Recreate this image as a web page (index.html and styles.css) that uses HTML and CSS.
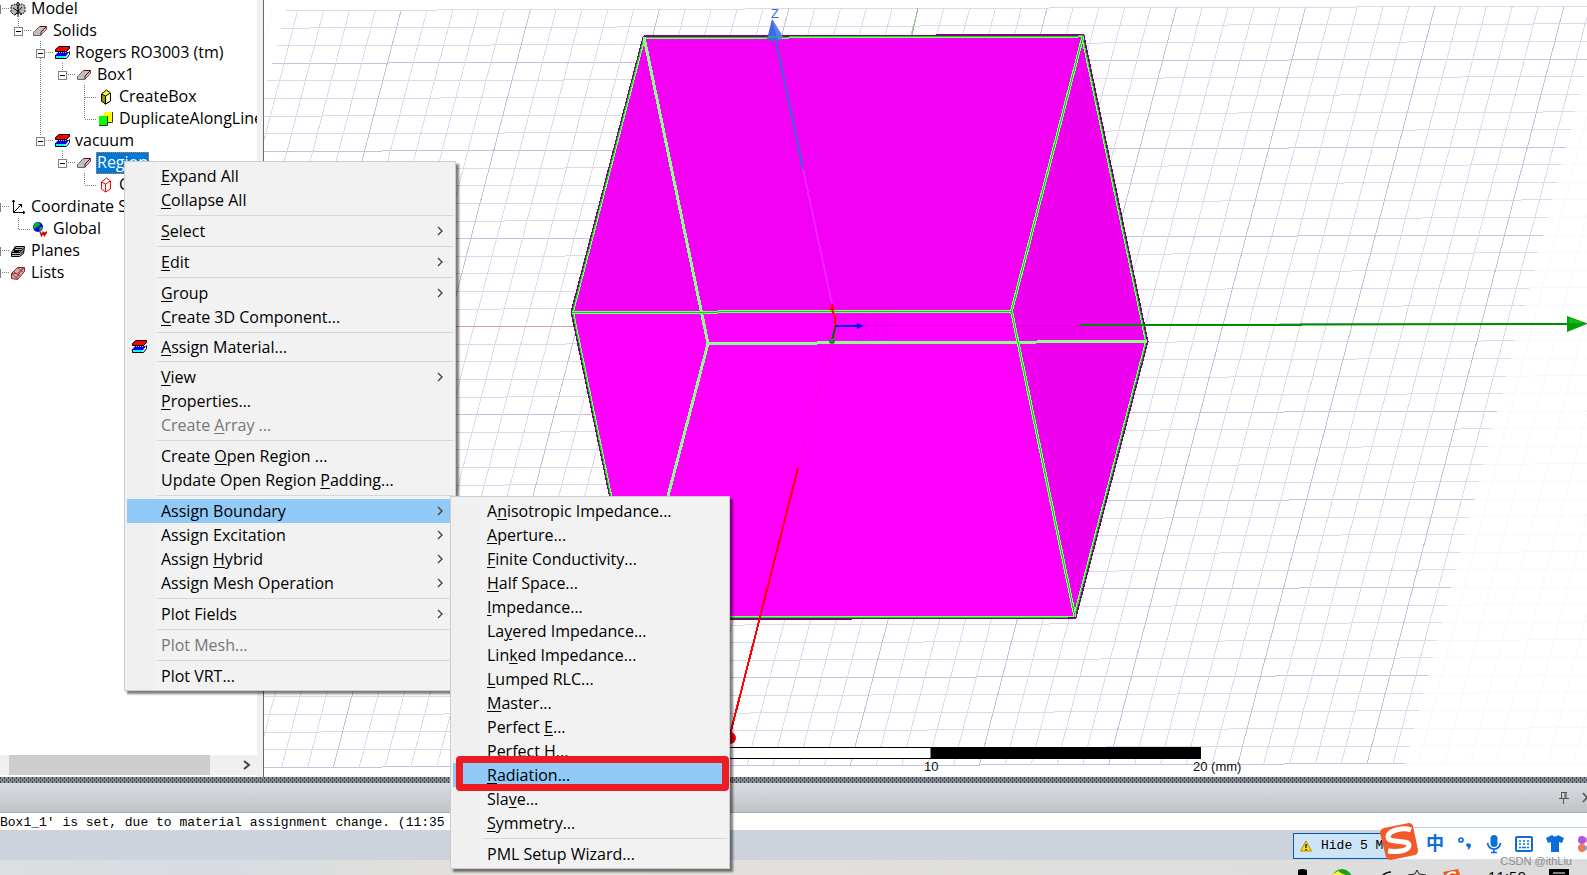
FILE: index.html
```html
<!DOCTYPE html>
<html lang="en">
<head>
<meta charset="utf-8">
<title>3D Modeler</title>
<link rel="stylesheet" href="styles.css">
</head>
<body>
<svg class="defs" aria-hidden="true">
  <symbol id="i-model" viewBox="0 0 16 16">
    <path d="M1 5l4-2 3 2v7l-4 2-3-3zM8 5l4-2 3 2v6l-4 3-3-2z" fill="#b8b8b8" stroke="#111" stroke-dasharray="2 1"/>
    <path d="M8 16V2M6 4l2-3 2 3M3 7l9 6M12 6l-7 8" fill="none" stroke="#111"/>
  </symbol>
  <symbol id="i-solid" viewBox="0 0 16 16">
    <path d="M1.500 12.500v-3l6-6h7v3l-6 6z" fill="#c0c0c0" stroke="#666"/>
    <path d="M7.500 3.500h7l-5.500 5.500v3.500" fill="none" stroke="#700"/>
  </symbol>
  <symbol id="i-material" viewBox="0 0 16 16">
    <path d="M4 7h11l-3 4H1z" fill="#00f"/>
    <path d="M1 11h11l-1 3H1z" fill="#0ff"/>
    <path d="M5 1.500h10.500v2l-3 3H1.500v-2z" fill="#f00" stroke="#000"/>
    <path d="M1.500 10v3.500h11l3-4v-3" fill="none" stroke="#000"/>
    <path d="M3 7.500h9" stroke="#cc0" stroke-dasharray="1 1"/>
  </symbol>
  <symbol id="i-box" viewBox="0 0 16 16">
    <path d="M3.500 5v7l4 3 5-3V4l-4-3z" fill="#ff0" stroke="#000"/>
    <path d="M3.500 5l4 2v8l-4-3z" fill="#990" stroke="#000"/>
    <path d="M7.500 7l5-3v8l-5 3z" fill="#ffc" stroke="#000"/>
  </symbol>
  <symbol id="i-boxred" viewBox="0 0 16 16">
    <path d="M3.500 5v7l4 3 5-3V4l-4-3zM3.500 5l4 2v8M7.500 7l5-3" fill="#fff" stroke="#f00"/>
  </symbol>
  <symbol id="i-dup" viewBox="0 0 16 16">
    <path d="M6 1h8v10H6z" fill="#ff0"/><path d="M1 5h8v9H1z" fill="#0f0"/>
    <path d="M1 14.500h8.500V5M9 11.500h5.500V1" fill="none" stroke="#333"/>
  </symbol>
  <symbol id="i-cs" viewBox="0 0 16 16">
    <path d="M3.500 1v12.500H15M3.500 13.500l8-8M2 3l1.500-2L5 3M13 12l2 1.500-2 1.500M8.500 5.500h3v3" fill="none" stroke="#000"/>
  </symbol>
  <symbol id="i-globe" viewBox="0 0 16 16">
    <circle cx="6" cy="6" r="5" fill="#00f"/>
    <path d="M3 2l4-1 1 3-3 2-2 2-2-2zM8 6l3 0-2 4-2-1z" fill="#0b0"/>
    <path d="M8 10.500l1.500 4 1.500-3 1.500 3 2-4M10 12h5" fill="none" stroke="#d00" stroke-width="1.500"/>
  </symbol>
  <symbol id="i-planes" viewBox="0 0 16 16">
    <path d="M1.500 9.500l4-6h9l-1 7-4 3h-8z" fill="#bbb" stroke="#000"/>
    <path d="M2 9.500h8l4-5M5 5.500h7M4 7.500h7M2 11.500h8l4-4M5 3.500l-1 5h5" fill="none" stroke="#000"/>
  </symbol>
  <symbol id="i-lists" viewBox="0 0 16 16">
    <path d="M1.500 13.500v-5l6-6h7v4l-7 8z" fill="#c8b0b0" stroke="#822"/>
    <path d="M2 9l6 5M4 7l6 4M1.500 8.500h6l7-6M6 13l7-10M8 3l5 4" fill="none" stroke="#a33"/>
  </symbol>
  <symbol id="i-more" viewBox="0 0 6 10"><path d="M1 1l4 4-4 4" fill="none" stroke="#444" stroke-width="1.400"/></symbol>
</svg>

<main class="workspace">
  <nav class="tree-pane" aria-label="Model tree">
    <div class="tree">
      <svg class="wires" width="260" height="290" aria-hidden="true">
        <path d="M26.500 19v7M48.500 41v8M48.500 58v78M70.500 63v7M92.500 85v34M70.500 151v7M92.500 173v12M26.500 218v11M10 8.500h8M32 30.500h8M54 52.500h8M76 74.500h8M93 97.500h12M93 119.500h12M54 140.500h8M76 162.500h8M93 185.500h12M10 206.500h8M27 229.500h12M10 250.500h8M10 272.500h8"/>
      </svg>
      <ul>
        <li class="row l0"><button class="toggle" aria-label="Collapse"></button><svg><use href="#i-model"/></svg><span>Model</span></li>
        <li class="row l1"><button class="toggle" aria-label="Collapse"></button><svg><use href="#i-solid"/></svg><span>Solids</span></li>
        <li class="row l2"><button class="toggle" aria-label="Collapse"></button><svg><use href="#i-material"/></svg><span>Rogers RO3003 (tm)</span></li>
        <li class="row l3"><button class="toggle" aria-label="Collapse"></button><svg><use href="#i-solid"/></svg><span>Box1</span></li>
        <li class="row l4"><i class="toggle-gap"></i><svg><use href="#i-box"/></svg><span>CreateBox</span></li>
        <li class="row l4"><i class="toggle-gap"></i><svg><use href="#i-dup"/></svg><span>DuplicateAlongLine</span></li>
        <li class="row l2"><button class="toggle" aria-label="Collapse"></button><svg><use href="#i-material"/></svg><span>vacuum</span></li>
        <li class="row l3"><button class="toggle" aria-label="Collapse"></button><svg><use href="#i-solid"/></svg><span class="selected">Region</span></li>
        <li class="row l4"><i class="toggle-gap"></i><svg><use href="#i-boxred"/></svg><span>C</span></li>
        <li class="row l0"><button class="toggle" aria-label="Collapse"></button><svg><use href="#i-cs"/></svg><span>Coordinate S</span></li>
        <li class="row l1"><i class="toggle-gap"></i><svg><use href="#i-globe"/></svg><span>Global</span></li>
        <li class="row l0"><button class="toggle" aria-label="Expand"></button><svg><use href="#i-planes"/></svg><span>Planes</span></li>
        <li class="row l0"><button class="toggle" aria-label="Expand"></button><svg><use href="#i-lists"/></svg><span>Lists</span></li>
      </ul>
    </div>
    <div class="hscroll">
      <div class="thumb"></div>
      <button class="arrow" aria-label="Scroll right"><svg width="8" height="10" viewBox="0 0 8 10"><path d="M1 1l5 4-5 4" fill="none" stroke="#444" stroke-width="2"/></svg></button>
    </div>
  </nav>

  <section class="view" aria-label="3D view">
    <svg class="scene" viewBox="264 0 1323 775" preserveAspectRatio="xMinYMin slice">
      <g id="grid" shape-rendering="crispEdges" fill="none"></g>
      <path d="M918 8L912 35" stroke="#8cc48c" shape-rendering="crispEdges"/>
      <path d="M456 326.500h117" stroke="#e89a9a" shape-rendering="crispEdges"/>
      <path d="M644 37L1083 35.500 1147 341.500 1075 617.500 636 618.500 572 312z" fill="#f0f"/>
      <path d="M644 37L1083 35.500 1011.500 311 572 312z" fill="#f400f4"/>
      <path d="M1083 35.500L1147 341.500 1075 617.500 1011.500 311z" fill="#ef00ef"/>
      <g fill="none" shape-rendering="crispEdges">
        <path d="M832 342L798 468" stroke="#ff00d8"/>
        <path d="M803 169L832 304" stroke="#f022ff" stroke-width="2"/>
        <path d="M863 326L1080 325" stroke="#dc00dc"/>
        <path d="M837 318h6l3 10-3 8h-6M855 318h9l3 10-3 8h-9M875 318h9l3 10-3 8h-9z" stroke="#ea00ea"/>
        <path d="M644 37L1083 35.500 1147 341.500 1075 617.500 636 618.500 572 312z" stroke="#800080" stroke-width="3"/>
        <path d="M644.500 38L1082 36.500 1146 341.500 1074 616.500 636.500 617.500 573 312z" stroke="#80ff80" stroke-width="2"/>
        <path d="M644 37.500L1082.500 36 1146.500 341.500 1074.500 617 636 618 572.500 312z" stroke="#00e800"/>
        <path d="M644 37L708 343.500 636 618M708 343.500L1147 341.500" stroke="#8cff8c" stroke-width="3"/>
        <path d="M572 312.500L1011.500 311M1083 36L1011.500 311 1075 617" stroke="#80ff80" stroke-width="3"/>
        <path d="M572 312.500L1011.500 311M1083 36L1011.500 311 1075 617" stroke="#0d0"/>
      </g>
      <path d="M776 41L803 169" stroke="#3a66d6" stroke-width="2"/>
      <path d="M772 19L783 37q-8 8-16 2z" fill="#4169e1"/><path d="M772 19l6 22 5-4z" fill="#5b82f5"/>
      <path d="M768 37h15" stroke="#3a9a9a" stroke-width="2"/>
      <text x="771" y="18" class="axis-label">Z</text>
      <path d="M798 468L730 735" stroke="#f00" stroke-width="2" shape-rendering="crispEdges"/>
      <circle cx="730" cy="738" r="6" fill="#e00"/>
      <path d="M1080 325L1301 325 1301 324.500 1568 324" stroke="#008b00" stroke-width="2" fill="none"/>
      <path d="M1567 316L1588 323.500 1567 332z" fill="#00a000"/><path d="M1569 318l16 5h-16z" fill="#1db81d"/>
      <path d="M832 309L835 318 835.500 326" stroke="#f00" stroke-width="2" fill="none"/>
      <path d="M832 303L829 310h6z" fill="#f00"/>
      <path d="M835.500 326L832 341" stroke="#046404" stroke-width="2"/>
      <circle cx="832" cy="341" r="3" fill="#447744"/>
      <path d="M836 326h22" stroke="#00f" stroke-width="2"/><path d="M857 323l7 3-7 3z" fill="#00f"/>
      <path d="M700 747.500h231v11H700z" fill="#fff" stroke="#000"/>
      <path d="M931 747h270v12H931z"/>
      <text x="924" y="771" class="scale-label">10</text>
      <text x="1193" y="771" class="scale-label">20 (mm)</text>
    </svg>
  </section>
</main>

<div class="splitter"></div>
<header class="dock-title">
  <button aria-label="Pin"><svg width="12" height="13" viewBox="0 0 12 13"><path d="M3 1.500h6M3.500 1v6M8 1v6M7 1v6M1 7.500h10M5.500 8v5" fill="none" stroke="#555"/></svg></button>
  <button aria-label="Close"><svg width="10" height="11" viewBox="0 0 10 11"><path d="M1 1l8 9M9 1l-8 9" fill="none" stroke="#555" stroke-width="1.500"/></svg></button>
</header>
<p class="message">Box1_1' is set, due to material assignment change. (11:35</p>
<footer class="status">
  <button class="hide-btn">
    <svg width="12" height="12" viewBox="0 0 12 12"><path d="M6 1l5.500 10H.5z" fill="#fd0" stroke="#b89000"/><path d="M6 4v4M6 9v1.500" stroke="#222" stroke-width="1.500"/></svg>
    <span>Hide 5 M</span>
  </button>
</footer>
<div class="taskbar" aria-hidden="true">
  <svg class="tray" width="320" height="15" viewBox="1267 860 320 15">
    <path d="M1298 870q4-2 9 0v5h-9z"/>
    <circle cx="1342" cy="879" r="10" fill="#1ca01c"/><circle cx="1342" cy="880" r="6" fill="#ff3"/><path d="M1332 875l6-4 6 4z" fill="#ff3"/>
    <path d="M1382 876q4-4 9-4" fill="none" stroke="#111" stroke-width="1.500"/>
    <path d="M1408 875l7-1 2-4 2 4 7 1" fill="#ddd" stroke="#222"/>
    <path d="M1443 872l15-3 2 6h-16z" fill="#ee5a24"/><path d="M1447 875q4-4 9-2" stroke="#fff" stroke-width="2" fill="none"/>
    <path d="M1549 869h20v6h-20z"/><path d="M1553 873h12" stroke="#fff"/>
  </svg>
  <span class="clock">11:50</span>
</div>

<div class="ime" role="toolbar" aria-label="Input method">
  <svg class="ime-logo" width="40" height="40" viewBox="0 0 40 40"><path d="M5 6L30 1q3 0 4 3l5 24q0 4-3 5L12 38q-4 0-5-3L1 11q0-4 4-5z" fill="#f4592b"/><path d="M32 8C25 5 9 8 9 15c0 7 20 2 21 8 0 7-14 7-21 6" fill="none" stroke="#fff" stroke-width="5"/></svg>
  <button aria-label="Chinese">中</button>
  <button aria-label="Punctuation"><svg width="16" height="16" viewBox="0 0 16 16"><circle cx="4" cy="4" r="2" fill="none" stroke="#0a6fdc" stroke-width="1.700"/><path d="M9 8q4-2 5 1 0 4-4 5 2-2 1-3-2 0-2-3z" fill="#0a6fdc"/></svg></button>
  <button aria-label="Voice"><svg width="16" height="20" viewBox="0 0 16 20"><rect x="4.500" y="1" width="7" height="12" rx="3.500" fill="#0a6fdc"/><path d="M1.500 9q1 6 6.500 6t6.500-6M8 15v4M5 18.500h6" fill="none" stroke="#0a6fdc" stroke-width="1.700"/></svg></button>
  <button aria-label="Keyboard"><svg width="18" height="16" viewBox="0 0 18 16"><rect x="1" y="1" width="16" height="14" rx="1" fill="none" stroke="#0a6fdc" stroke-width="2"/><path d="M4 5h2M8 5h2M12 5h2M4 8h2M8 8h2M12 8h2M4 11.500h2M7 11.500h4M12 11.500h2" stroke="#0a6fdc" stroke-width="1.600"/></svg></button>
  <button aria-label="Skin"><svg width="18" height="17" viewBox="0 0 18 17"><path d="M0 3l6-3q3 3 6 0l6 3-2 5-3-1v10H5V7L2 8z" fill="#0a6fdc"/></svg></button>
  <button aria-label="Toolbox"><svg width="18" height="18" viewBox="0 0 18 18"><circle cx="5" cy="5" r="4" fill="#b455d8"/><circle cx="13" cy="5" r="4" fill="#c46ae0"/><circle cx="5" cy="13" r="4" fill="#ef7a55"/><circle cx="13" cy="13" r="4" fill="#4aa8e8"/></svg></button>
</div>
<p class="credit">CSDN @ithLiu</p>

<div class="menu main-menu" role="menu">
  <button role="menuitem"><u>E</u>xpand All</button>
  <button role="menuitem"><u>C</u>ollapse All</button>
  <hr>
  <button role="menuitem"><u>S</u>elect<svg class="more"><use href="#i-more"/></svg></button>
  <hr>
  <button role="menuitem"><u>E</u>dit<svg class="more"><use href="#i-more"/></svg></button>
  <hr>
  <button role="menuitem"><u>G</u>roup<svg class="more"><use href="#i-more"/></svg></button>
  <button role="menuitem"><u>C</u>reate 3D Component...</button>
  <hr>
  <button role="menuitem" class="with-icon"><svg class="glyph"><use href="#i-material"/></svg><span><u>A</u>ssign Material...</span></button>
  <hr>
  <button role="menuitem"><u>V</u>iew<svg class="more"><use href="#i-more"/></svg></button>
  <button role="menuitem"><u>P</u>roperties...</button>
  <button role="menuitem" disabled>Create <u>A</u>rray ...</button>
  <hr>
  <button role="menuitem">Create <u>O</u>pen Region ...</button>
  <button role="menuitem">Update Open Region <u>P</u>adding...</button>
  <hr>
  <button role="menuitem" class="active">Assign Boundary<svg class="more"><use href="#i-more"/></svg></button>
  <button role="menuitem">Assign Excitation<svg class="more"><use href="#i-more"/></svg></button>
  <button role="menuitem">Assign <u>H</u>ybrid<svg class="more"><use href="#i-more"/></svg></button>
  <button role="menuitem">Assign Mesh Operation<svg class="more"><use href="#i-more"/></svg></button>
  <hr>
  <button role="menuitem">Plot Fields<svg class="more"><use href="#i-more"/></svg></button>
  <hr>
  <button role="menuitem" disabled>Plot Mesh...</button>
  <hr>
  <button role="menuitem">Plot VRT...</button>
</div>

<div class="menu sub-menu" role="menu">
  <button role="menuitem">A<u>n</u>isotropic Impedance...</button>
  <button role="menuitem"><u>A</u>perture...</button>
  <button role="menuitem"><u>F</u>inite Conductivity...</button>
  <button role="menuitem"><u>H</u>alf Space...</button>
  <button role="menuitem"><u>I</u>mpedance...</button>
  <button role="menuitem">La<u>y</u>ered Impedance...</button>
  <button role="menuitem">Lin<u>k</u>ed Impedance...</button>
  <button role="menuitem"><u>L</u>umped RLC...</button>
  <button role="menuitem"><u>M</u>aster...</button>
  <button role="menuitem">Perfect <u>E</u>...</button>
  <button role="menuitem">Perfect <u>H</u>...</button>
  <button role="menuitem" class="active marked"><u>R</u>adiation...</button>
  <button role="menuitem">Sla<u>v</u>e...</button>
  <button role="menuitem"><u>S</u>ymmetry...</button>
  <hr>
  <button role="menuitem">PML Setup Wizard...</button>
</div>
<script src="grid.js"></script>
</body>
</html>
```

FILE: styles.css
```css
* { box-sizing: border-box; }
body {
  margin: 0;
  height: 100vh;
  display: flex;
  flex-direction: column;
  overflow: hidden;
  position: relative;
  background: #fff;
  color: #000;
  font: 16px/22px "Open Sans", "Noto Sans", sans-serif;
}
button { font: inherit; color: inherit; border: 0; background: none; padding: 0; margin: 0; }
svg { display: block; flex: none; }
p, ul { margin: 0; padding: 0; list-style: none; }
.defs { position: absolute; width: 0; height: 0; }

.workspace { flex: 1; min-height: 0; display: flex; }
.tree-pane {
  width: 264px;
  flex: none;
  display: flex;
  flex-direction: column;
  justify-content: space-between;
  overflow: hidden;
  border-right: 1px solid #696969;
  box-shadow: inset -6px 0 #f0f0f0;
  padding: 0 6px 2px 0;
}
.tree { position: relative; margin: -2px 0 0 -8px; overflow: hidden; }
.wires { position: absolute; left: 0; top: 2px; }
.wires path { fill: none; stroke: #808080; stroke-dasharray: 1 1; shape-rendering: crispEdges; }
.row { display: flex; align-items: center; height: 22px; white-space: nowrap; }
.row > svg { width: 16px; height: 16px; margin: 0 4px 0 9px; }
.row > span { height: 22px; padding: 0 1px; line-height: 20px; position: relative; }
.l1 { padding-left: 22px; }
.l2 { padding-left: 44px; }
.l3 { padding-left: 66px; }
.l4 { padding-left: 88px; }
.toggle, .toggle-gap { width: 9px; height: 9px; flex: none; }
.toggle {
  position: relative;
  border: 1px solid #808080;
  background: linear-gradient(#000, #000) center / 5px 1px no-repeat #fff;
}
.selected { background: #0078d7; color: #fff; outline: 1px dotted #e08030; outline-offset: -1px; }
.hscroll { display: flex; height: 20px; padding: 0 6px 0 9px; background: #f0f0f0; justify-content: space-between; }
.thumb { width: 201px; background: #cdcdcd; }

.view { flex: 1; min-width: 0; padding-bottom: 2px; overflow: hidden; }
.scene { width: 100%; height: 100%; }
.axis-label { font: 13px "Liberation Sans", sans-serif; fill: #4169e1; }
.scale-label { font: 13px "Liberation Sans", sans-serif; fill: #111; }
.line-minor { stroke: #dadaea; }
.line-major { stroke: #c2c2de; }
.line-faint { stroke: #f8f8fb; }

.splitter {
  height: 6px;
  flex: none;
  background:
    conic-gradient(from 0deg at 1px 2px, transparent 270deg, #34466e 0) 0 0 / 4px 4px,
    conic-gradient(from 0deg at 1px 2px, transparent 270deg, #34466e 0) 2px 2px / 4px 4px,
    #8a8c8e;
}
.dock-title {
  height: 30px;
  flex: none;
  display: flex;
  justify-content: flex-end;
  align-items: center;
  gap: 12px;
  background: linear-gradient(#d9dce1, #bfc2c6);
  border-bottom: 1px solid #a8abaf;
  margin-right: -5px;
}
.message {
  height: 17px;
  flex: none;
  font: 13px/19px "Liberation Mono", monospace;
  white-space: nowrap;
  overflow: hidden;
}
.status { height: 30px; flex: none; display: flex; justify-content: flex-end; background: #cdd3dc; padding: 3px 144px 1px 0; }
.hide-btn {
  width: 150px;
  display: flex;
  align-items: center;
  gap: 9px;
  padding-left: 6px;
  border: 1px solid #0a5aa0;
  background: #cce4f7;
  font: 13px/16px "Liberation Mono", monospace;
  white-space: nowrap;
  overflow: hidden;
}
.taskbar {
  position: relative;
  height: 15px;
  flex: none;
  overflow: hidden;
  background: linear-gradient(90deg, #dcdfdf, #d8dbe2 13%, #dddedd 22%, #e4e1db 30%, #dedede 70%, #dcdcdc);
}
.tray { position: absolute; right: 0; top: 0; }
.clock { position: absolute; right: 61px; top: 5px; font-size: 15px; line-height: 22px; }

.ime {
  position: absolute;
  right: -8px;
  bottom: 15px;
  height: 33px;
  display: flex;
  align-items: center;
  gap: 13px;
  background: #fff;
  border-top: 1px solid #b4cdec;
  border-bottom: 1px solid #d8e2ee;
  color: #0a6fdc;
  font: 700 18px/20px "Liberation Sans", "Noto Sans CJK SC", sans-serif;
}
.ime-logo { margin: -4px -6px 0 -10px; }
.credit { position: absolute; right: 15px; bottom: 5px; font: 11px/18px "Liberation Sans", sans-serif; color: #8a8a8a; }

.menu {
  position: absolute;
  display: flex;
  flex-direction: column;
  padding: 2px;
  border: 1px solid #ccc;
  background: linear-gradient(90deg, #f0f0f0 30px, #f2f2f2 30px);
  box-shadow: 3px 3px 2px rgba(0, 0, 0, .5);
  line-height: 24px;
}
.menu button { height: 24px; padding: 0 10px 0 34px; display: flex; align-items: center; white-space: pre; text-align: left; }
.menu hr { width: calc(100% - 30px); height: 1px; margin: 3px 0 3px 30px; border: 0; background: #d7d7d7; }
.menu u { text-underline-offset: 2px; text-decoration-thickness: 1px; }
.menu .active { background: #91c9f7; }
.menu button:disabled { color: #777; }
.menu .more { width: 6px; height: 10px; margin-left: auto; }
.menu .with-icon { height: 22px; padding-left: 4px; }
.menu .glyph { width: 16px; height: 16px; margin-right: 14px; }
.main-menu { left: 124px; top: 161px; width: 332px; }
.sub-menu { left: 450px; top: 496px; width: 280px; }
.marked { position: relative; }
.marked::after {
  content: "";
  position: absolute;
  inset: -7px -2px -4px 3px;
  border: 7px solid #ed1c24;
  border-radius: 4px;
}
```

FILE: grid.js
```js
// Draws the construction plane: two families of parallel lines, every fifth one darker.
const grid = document.getElementById('grid');
const TOP = 7, BOTTOM = 765, STEP_Y = 17.6, STEP_X = 25.84, SKEW = -0.26, TILT = -0.0033;
const rightEdge = y => 1566 - 0.2615 * (y - 148);
const leftEdge = y => Math.max(264, 285 - 0.26 * (y - 10));

function line(x1, y1, x2, y2, cls) {
  const el = document.createElementNS('http://www.w3.org/2000/svg', 'path');
  el.setAttribute('d', `M${x1.toFixed(1)} ${y1.toFixed(1)}L${x2.toFixed(1)} ${y2.toFixed(1)}`);
  el.setAttribute('class', cls);
  grid.append(el);
}

for (let i = 0; i <= 43; i++) {
  const y = x => TOP + 0.5 + i * STEP_Y + (x - 1200) * TILT;
  const start = leftEdge(TOP + i * STEP_Y);
  const end = rightEdge(TOP + i * STEP_Y);
  line(start, y(start), end, y(end), i % 5 === 3 ? 'line-major' : 'line-minor');
  if (end < 1587) line(end, y(end), 1587, y(1587), 'line-faint');
}
for (let i = -40; i <= 24; i++) {
  const x = 1305.7 + i * STEP_X;
  const cls = i > 11 || i < -39 ? 'line-faint' : i % 5 === 0 ? 'line-major' : 'line-minor';
  const shift = (x - 1200) * TILT;
  line(x, TOP + shift, x + (BOTTOM - TOP) * SKEW, BOTTOM + shift, cls);
}
```
